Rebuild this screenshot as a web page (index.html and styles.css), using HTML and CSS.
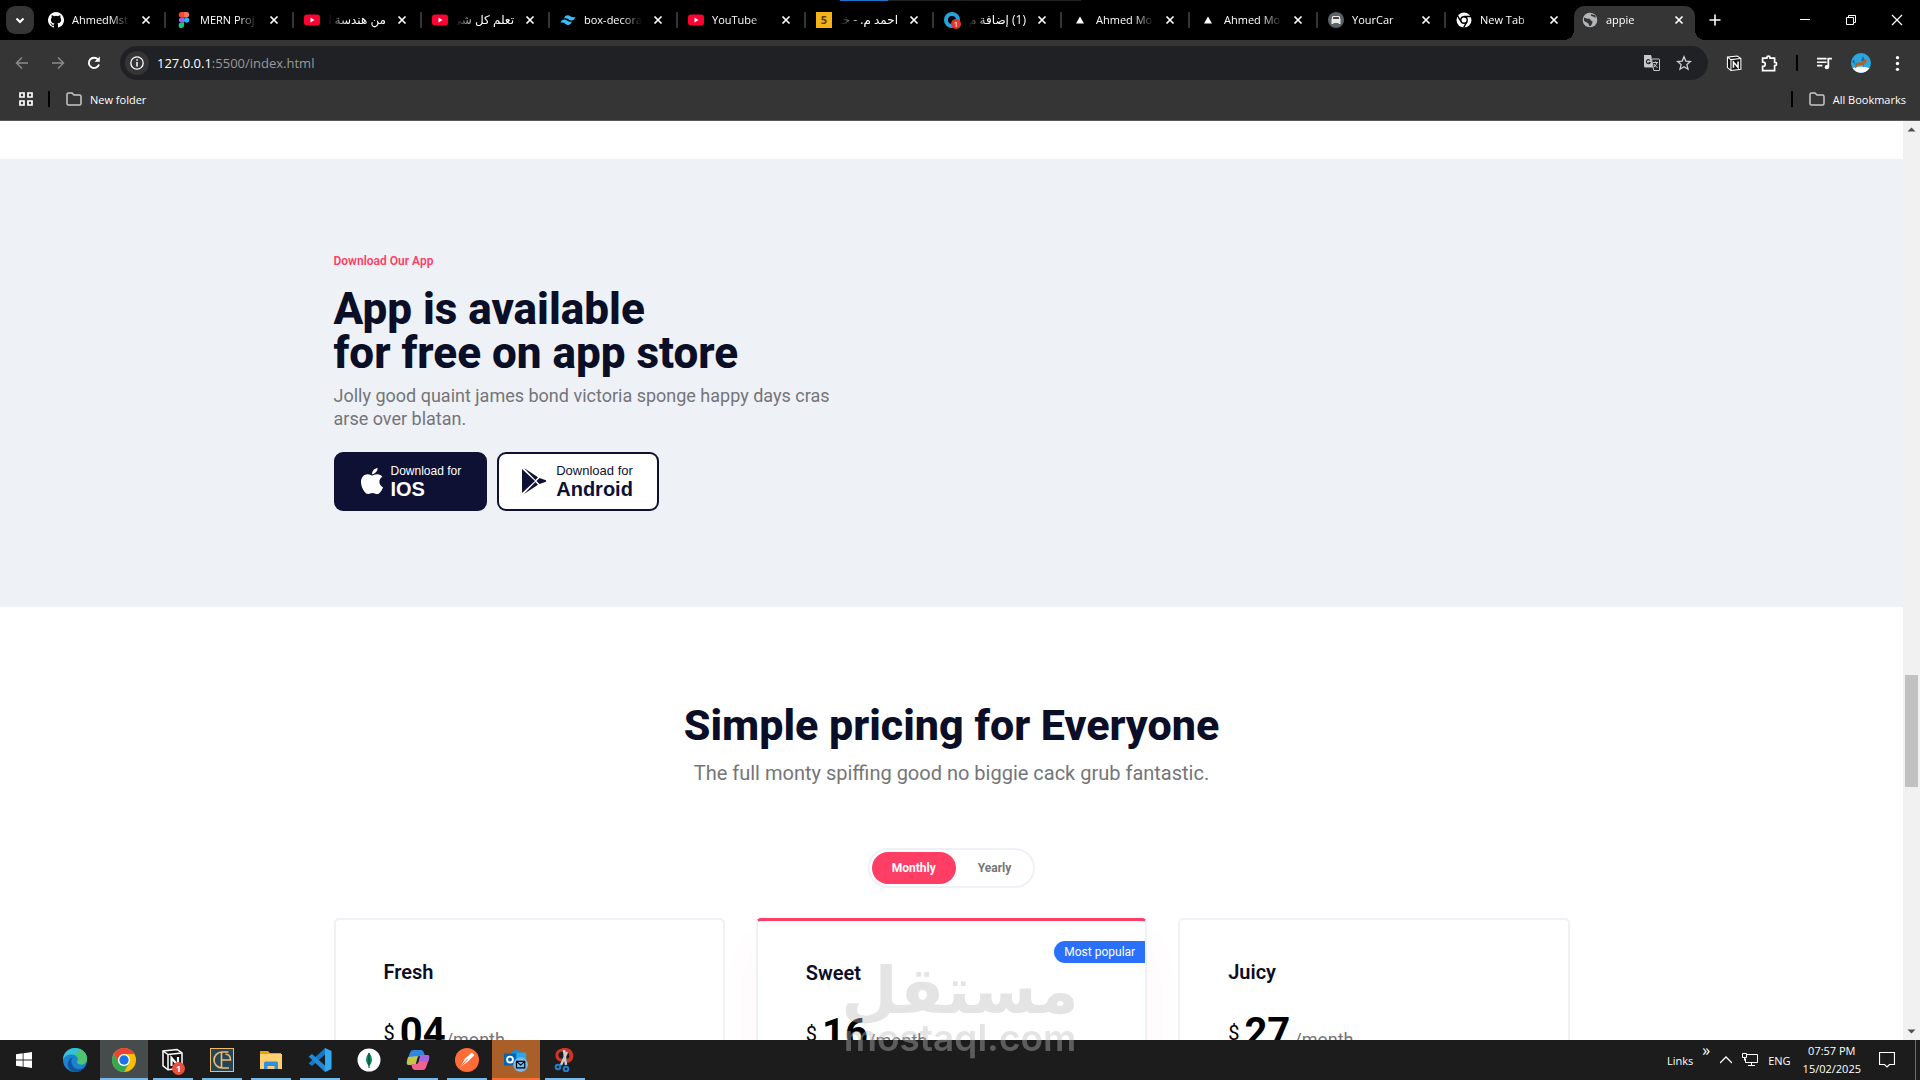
FILE: index.html
```html
<!DOCTYPE html>
<html lang="en">
<head>
  <meta charset="UTF-8">
  <title>appie</title>
  <link rel="stylesheet" href="styles.css">
</head>
<body>

  <!-- shared icons -->
  <svg class="sprite" aria-hidden="true">
    <symbol id="x" viewBox="0 0 16 16"><path d="M4.5 4.5l7 7M11.5 4.5l-7 7" stroke="currentColor" stroke-width="1.7"/></symbol>
    <symbol id="yt" viewBox="0 0 16 16"><rect y="2.5" width="16" height="11" rx="3" fill="#ff0033"/><path d="M6.5 5.6v4.8l4-2.4z" fill="#fff"/></symbol>
    <symbol id="triangle" viewBox="0 0 16 16"><path d="M8 4.500l4 7H4z" fill="#fff"/></symbol>
    <symbol id="folder" viewBox="0 0 16 14"><path d="M1 2.500q0-1.500 1.500-1.500h3.500l2 2h5.500q1.500 0 1.500 1.500v7q0 1.500-1.500 1.500h-11Q1 13 1 11.500z" fill="none" stroke="#c7c7c7" stroke-width="1.500"/></symbol>
    <symbol id="notion" viewBox="0 0 24 24"><path d="M2 3l14-1.500 5 3.500v15l-14 1.800-5-4z" fill="#111" stroke="#fff" stroke-width="1.500"/><path d="M2 3l5 3.500 14-1.500M7 6.500v15" fill="none" stroke="#fff" stroke-width="1.500"/><path d="M10.500 18V10l6.500 7.500V9" fill="none" stroke="#fff" stroke-width="2.200"/></symbol>
  </svg>

  <header class="browser">
    <div class="tab-strip">
      <button class="tab-search" aria-label="Search tabs"><svg viewBox="0 0 28 28"><path d="M10.500 12.500l3.500 3.500 3.500-3.500" fill="none" stroke="#fff" stroke-width="2"/></svg></button>

      <div class="tab">
        <svg class="fav" viewBox="0 0 16 16"><path fill="#fff" d="M8 0a8 8 0 0 0-2.530 15.590c.4.070.55-.170.55-.380v-1.490c-2.230.490-2.690-.940-2.690-.940-.360-.930-.890-1.170-.890-1.170-.730-.500.060-.490.060-.490.800.060 1.230.830 1.230.830.710 1.220 1.870.870 2.330.660.070-.520.280-.870.500-1.070-1.780-.200-3.640-.890-3.640-3.950 0-.870.310-1.590.820-2.150-.080-.200-.360-1.020.080-2.120 0 0 .670-.210 2.200.820a7.600 7.600 0 0 1 4 0c1.530-1.040 2.200-.820 2.200-.820.440 1.100.160 1.920.080 2.120.510.560.820 1.270.820 2.150 0 3.070-1.870 3.750-3.650 3.950.290.250.540.730.540 1.480v2.190c0 .210.150.460.550.380A8 8 0 0 0 8 0z"/></svg>
        <span class="tab-title">AhmedMst</span>
        <button class="tab-close" aria-label="Close tab"><svg><use href="#x"/></svg></button>
      </div>
      <div class="tab">
        <svg class="fav" viewBox="0 0 16 16"><path d="M8 0H5.500a2.700 2.700 0 0 0 0 5.400H8z" fill="#f24e1e"/><path d="M8 0h2.500a2.700 2.700 0 0 1 0 5.400H8z" fill="#ff7262"/><path d="M8 5.400H5.500a2.600 2.600 0 0 0 0 5.200H8z" fill="#a259ff"/><circle cx="10.600" cy="8" r="2.600" fill="#1abcfe"/><path d="M8 10.600H5.500A2.700 2.700 0 1 0 8 13.300z" fill="#0acf83"/></svg>
        <span class="tab-title">MERN Proj</span>
        <button class="tab-close" aria-label="Close tab"><svg><use href="#x"/></svg></button>
      </div>
      <div class="tab">
        <svg class="fav"><use href="#yt"/></svg>
        <span class="tab-title rtl" dir="rtl">من هندسة ا</span>
        <button class="tab-close" aria-label="Close tab"><svg><use href="#x"/></svg></button>
      </div>
      <div class="tab">
        <svg class="fav"><use href="#yt"/></svg>
        <span class="tab-title rtl" dir="rtl">تعلم كل شئ</span>
        <button class="tab-close" aria-label="Close tab"><svg><use href="#x"/></svg></button>
      </div>
      <div class="tab">
        <svg class="fav" viewBox="0 0 16 16"><path fill="#38bdf8" d="M4 6.500Q5 2.900 8.300 3.200c2.700.300 2.600 3 7.200 1.800Q14 9 10.800 8.500C8.500 8 7.500 5.300 4 6.500zM.5 10.900Q1.500 7.300 4.800 7.600c2.700.300 2.600 3 7.200 1.800-1.500 4-4.700 3.500-4.700 3.500C5 12.500 4 9.700.5 10.900z"/></svg>
        <span class="tab-title">box-decora</span>
        <button class="tab-close" aria-label="Close tab"><svg><use href="#x"/></svg></button>
      </div>
      <div class="tab">
        <svg class="fav"><use href="#yt"/></svg>
        <span class="tab-title">YouTube</span>
        <button class="tab-close" aria-label="Close tab"><svg><use href="#x"/></svg></button>
      </div>
      <div class="tab">
        <span class="fav five">5</span>
        <span class="tab-title rtl" dir="rtl">احمد م. - خم</span>
        <button class="tab-close" aria-label="Close tab"><svg><use href="#x"/></svg></button>
      </div>
      <div class="tab">
        <span class="fav ring"><span class="count">1</span></span>
        <span class="tab-title rtl" dir="rtl">(1) إضافة مع</span>
        <button class="tab-close" aria-label="Close tab"><svg><use href="#x"/></svg></button>
      </div>
      <div class="tab">
        <svg class="fav"><use href="#triangle"/></svg>
        <span class="tab-title">Ahmed Mo</span>
        <button class="tab-close" aria-label="Close tab"><svg><use href="#x"/></svg></button>
      </div>
      <div class="tab">
        <svg class="fav"><use href="#triangle"/></svg>
        <span class="tab-title">Ahmed Mo</span>
        <button class="tab-close" aria-label="Close tab"><svg><use href="#x"/></svg></button>
      </div>
      <div class="tab">
        <svg class="fav" viewBox="0 0 16 16"><circle cx="8" cy="8" r="8" fill="#5b6367"/><path d="M3.500 7.500l1-3.500h7l1 3.500v4.500h-2v-1h-5v1h-2z" fill="#e8e8e8"/><path d="M4.800 7l.6-2h5.200l.6 2z" fill="#444"/></svg>
        <span class="tab-title">YourCar</span>
        <button class="tab-close" aria-label="Close tab"><svg><use href="#x"/></svg></button>
      </div>
      <div class="tab last">
        <svg class="fav" viewBox="0 0 16 16"><circle cx="8" cy="8" r="7.500" fill="#fff"/><circle cx="8" cy="8" r="3.200" fill="#fff" stroke="#000" stroke-width="1.400"/><path d="M8 4.500h7M5 9.700L1.600 3.800M11 9.700l-3.400 6" stroke="#000" stroke-width="1.400"/></svg>
        <span class="tab-title">New Tab</span>
        <button class="tab-close" aria-label="Close tab"><svg><use href="#x"/></svg></button>
      </div>
      <div class="tab active">
        <svg class="fav" viewBox="0 0 16 16"><circle cx="8" cy="8" r="7.300" fill="#b4b7ba"/><path d="M2 5.500c2 .5 3 1.500 5 1.300s1 2 2.700 2.200c1.800.3.300 3-.7 4.500-.6 1-2.300.5-2.200-1 .1-1.700-3.600-2-4.800-4zM9 2c-.8 1.500.8 2.300 2 2.500s1.500 1.500 3 1l-1-2.300z" fill="#353535"/></svg>
        <span class="tab-title">appie</span>
        <button class="tab-close" aria-label="Close tab"><svg><use href="#x"/></svg></button>
      </div>
      <button class="new-tab" aria-label="New tab"><svg viewBox="0 0 16 16"><path d="M8 2.500v11M2.500 8h11" stroke="#fff" stroke-width="1.600"/></svg></button>

      <div class="window-buttons">
        <button aria-label="Minimize"><svg viewBox="0 0 12 12"><path d="M1 5.500h10" stroke="#fff"/></svg></button>
        <button aria-label="Restore"><svg viewBox="0 0 12 12"><path d="M1.500 3.500h7v7h-7zM3.500 3.500v-2h7v7h-2" fill="none" stroke="#fff"/></svg></button>
        <button aria-label="Close"><svg viewBox="0 0 12 12"><path d="M1 1l10 10M11 1L1 11" stroke="#fff" stroke-width="1.200"/></svg></button>
      </div>
      <div class="load-line"></div>
    </div>

    <div class="toolbar">
      <button class="tool dim" aria-label="Back"><svg viewBox="0 0 16 16"><path d="M14 8H3M8 2.500L2.500 8 8 13.500" fill="none" stroke="currentColor" stroke-width="1.500"/></svg></button>
      <button class="tool dim" aria-label="Forward"><svg viewBox="0 0 16 16"><path d="M2 8h11M8 2.500L13.500 8 8 13.500" fill="none" stroke="currentColor" stroke-width="1.500"/></svg></button>
      <button class="tool" aria-label="Reload"><svg viewBox="0 0 16 16"><path d="M13 9.500A5.200 5.200 0 1 1 12 4.500" fill="none" stroke="currentColor" stroke-width="1.900"/><path d="M13.800 1.500v5.300H8.500z" fill="currentColor"/></svg></button>
      <div class="address">
        <button class="site-info" aria-label="Site information"><svg viewBox="0 0 16 16"><circle cx="8" cy="8" r="6.200" fill="none" stroke="#fff" stroke-width="1.300"/><path d="M8 7v4.500M8 4.300v1.500" stroke="#fff" stroke-width="1.500"/></svg></button>
        <span class="url"><b>127.0.0.1</b>:5500/index.html</span>
        <button class="tool" aria-label="Translate"><svg viewBox="0 0 16 16"><path d="M0 0h7l1 3.500h-1l2 9H1.500Q0 12.500 0 11z" fill="#c7c7c7"/><path d="M7.500 4H15q.5 0 .5.500V15q0 .5-.5.500H9.800z" fill="none" stroke="#c7c7c7"/><path d="M6 5.500a2 2 0 1 0 .2 2H4.500" fill="none" stroke="#202124" stroke-width="1.100"/><path d="M9 7.500h5M11.500 6.500v1M13 7.500q-.5 2.500-3 4.500M10 9q1 2.500 3.500 3.500" fill="none" stroke="#c7c7c7"/></svg></button>
        <button class="tool" aria-label="Bookmark this tab"><svg viewBox="0 0 16 16"><path d="M8 1.700l1.800 4.400 4.700.4-3.600 3.100 1.100 4.600L8 11.700l-4 2.500 1.100-4.600L1.500 6.500l4.700-.4z" fill="none" stroke="#d0d0d0" stroke-width="1.300"/></svg></button>
      </div>
      <div class="extensions">
        <button class="tool" aria-label="Notion"><svg><use href="#notion"/></svg></button>
        <button class="tool" aria-label="Extensions"><svg viewBox="0 0 16 16"><path d="M1.500 3h4V2.500a1.500 1.500 0 0 1 3 0V3h4.300v4h.4a1.500 1.500 0 0 1 0 3h-.4v4.700H1.500v-4h.5a2 2 0 0 0 0-4h-.5z" fill="none" stroke="#fff" stroke-width="1.600"/></svg></button>
        <span class="divider"></span>
        <button class="tool" aria-label="Media"><svg viewBox="0 0 16 16"><path d="M1 3.500h9M1 6.800h9M1 10h5" stroke="#fff" stroke-width="1.600"/><circle cx="10.200" cy="11.500" r="2" fill="#fff"/><path d="M11.600 11.500V3.500H15" fill="none" stroke="#fff" stroke-width="1.700"/></svg></button>
        <button class="avatar" aria-label="Profile"><svg viewBox="0 0 20 20"><circle cx="10" cy="10" r="10" fill="#2aa7e0"/><path d="M1.500 15q8-3 17 0A10 10 0 0 1 1.500 15z" fill="#fff"/><path d="M1 9l2-3 1 5zM12 3l2 5h-4z" fill="#176f9e"/><path d="M3 13l2-3 6-1 3-3 2 1-1 3-2 1v3h-1v-2H7l-2 3H4l1-3z" fill="#b0602d"/></svg></button>
        <button class="tool" aria-label="Menu"><svg viewBox="0 0 16 16"><circle cx="8" cy="2.500" r="1.600" fill="#fff"/><circle cx="8" cy="8" r="1.600" fill="#fff"/><circle cx="8" cy="13.500" r="1.600" fill="#fff"/></svg></button>
      </div>
    </div>

    <div class="bookmarks">
      <button class="tool" aria-label="Apps"><svg viewBox="0 0 16 16"><path d="M2 2h4v4H2zM10 2h4v4h-4zM2 10h4v4H2zM10 10h4v4h-4z" fill="none" stroke="#fff" stroke-width="1.700"/></svg></button>
      <span class="divider"></span>
      <a class="bookmark" href="#"><svg><use href="#folder"/></svg>New folder</a>
      <span class="divider push"></span>
      <a class="bookmark" href="#"><svg><use href="#folder"/></svg>All Bookmarks</a>
    </div>
  </header>

  <div class="viewport">
    <main class="page">
      <section class="download">
        <div class="content">
          <span class="eyebrow">Download Our App</span>
          <h2>App is available<br>for free on app store</h2>
          <p>Jolly good quaint james bond victoria sponge happy days cras arse over blatan.</p>
          <div class="stores">
            <button class="store ios">
              <svg viewBox="0 0 384 512"><path fill="currentColor" d="M318.700 268.700c-.2-36.700 16.400-64.400 50-84.800-18.800-26.900-47.200-41.700-84.700-44.600-35.500-2.800-74.300 20.700-88.500 20.700-15 0-49.400-19.700-76.400-19.700C63.300 141.200 4 184.800 4 273.500q0 39.300 14.400 81.200c12.800 36.700 59 126.700 107.200 125.200 25.200-.6 43-17.900 75.800-17.900 31.800 0 48.300 17.900 76.400 17.900 48.600-.7 90.400-82.500 102.600-119.300-65.200-30.700-61.700-90-61.700-91.900zm-56.600-164.200c27.300-32.400 24.800-61.900 24-72.500-24.100 1.400-52 16.400-67.900 34.900-17.500 19.800-27.800 44.300-25.600 71.900 26.100 2 49.900-11.400 69.500-34.300z"/></svg>
              <span class="label"><small>Download for</small><strong>IOS</strong></span>
            </button>
            <button class="store android">
              <svg viewBox="0 0 26 28"><path d="M1 2l13 12L1 26z" fill="#0e1133"/><path d="M3 1l14 9.300-2.600 2.600zM3 27l14-9.300-2.600-2.600z" fill="#0e1133"/><path d="M18.500 11L25 13.200v1.600L18.500 17l-3-3z" fill="#0e1133"/></svg>
              <span class="label"><small>Download for</small><strong>Android</strong></span>
            </button>
          </div>
        </div>
      </section>

      <section class="pricing">
        <div class="content">
          <h2>Simple pricing for Everyone</h2>
          <p>The full monty spiffing good no biggie cack grub fantastic.</p>
          <div class="toggle">
            <button class="on">Monthly</button>
            <button>Yearly</button>
          </div>
          <div class="cards">
            <article class="card">
              <h3>Fresh</h3>
              <div class="price"><sup>$</sup><b>04</b><span>/month</span></div>
            </article>
            <article class="card popular">
              <span class="badge">Most popular</span>
              <h3>Sweet</h3>
              <div class="price"><sup>$</sup><b>16</b><span>/month</span></div>
            </article>
            <article class="card">
              <h3>Juicy</h3>
              <div class="price"><sup>$</sup><b>27</b><span class="spaced">/month</span></div>
            </article>
          </div>
        </div>
      </section>
    </main>
    <div class="scrollbar">
      <svg viewBox="0 0 17 17"><path d="M8.500 6.500l4 4h-8z" fill="#505050"/></svg>
      <div class="track"><div class="thumb"></div></div>
      <svg viewBox="0 0 17 17"><path d="M8.500 10.500l-4-4h8z" fill="#505050"/></svg>
    </div>
  </div>

  <footer class="taskbar">
    <button class="task start" aria-label="Start"><svg viewBox="0 0 16 16"><path d="M0 2.300l6.700-1v6.300H0zM7.500 1.200L16 0v7.600H7.500zM0 8.400h6.700v6.300L0 13.700zM7.500 8.400H16V16l-8.500-1.200z" fill="#fff"/></svg></button>
    <button class="task" aria-label="Edge"><svg viewBox="0 0 24 24"><circle cx="12" cy="12" r="12" fill="#1a82d0"/><path d="M0 12C0 5 5 0 12 0s12 5 12 10.500c0 4-3 6-6 6-2.500 0-4-1-4-2.200 0-.8 1-1.300 1-3C15 8.500 11.500 6.500 8 6.500c-4 0-7 2.500-8 5.500z" fill="#35c1d6"/><path d="M17 1.200C21.500 3.200 24 6.800 24 10.500c0 4-3 6-6 6-2.500 0-4-1-4-2.200 0-.8 1-1.300 1-3 0-2-1.500-3.400-3-4.300z" fill="#4fc46a"/><path d="M10 9c-3 3-2 10 4 12 3 1 6-.5 8-3-2 4-6 6-10 6-5-1-8-5-7-9 .5-3 2-5 5-6z" fill="#12559f"/></svg></button>
    <button class="task open current" aria-label="Chrome"><svg viewBox="0 0 24 24"><circle cx="12" cy="12" r="12" fill="#fbbc04"/><path d="M1.600 6A12 12 0 0 1 22.400 6H12a6 6 0 0 0-5.200 9z" fill="#ea4335"/><path d="M1.600 6A12 12 0 0 0 12 24l5.200-9A6 6 0 0 1 6.800 15z" fill="#34a853"/><circle cx="12" cy="12" r="6" fill="#fff"/><circle cx="12" cy="12" r="4.700" fill="#1a73e8"/></svg></button>
    <button class="task open" aria-label="Notion"><svg><use href="#notion"/></svg><span class="alert">1</span></button>
    <button class="task open" aria-label="Editor"><svg viewBox="0 0 24 24"><rect x=".5" y=".5" width="23" height="23" fill="#264653" stroke="#f0bb74"/><path d="M18.500 4H12a8 8 0 0 0 0 16h7M11.500 4v16M11.500 12h9q0-5.500-5-6" fill="none" stroke="#f0bb74" stroke-width="1.600"/></svg></button>
    <button class="task open" aria-label="File Explorer"><svg viewBox="0 0 24 24"><path d="M1 3h8l2 2h11v5H1z" fill="#e5a50a"/><path d="M1 6h22v15H1z" fill="#ffcf70"/><path d="M5 21v-6q0-1.500 1.500-1.500h11Q19 13.500 19 15v6h-3.500v-3h-7v3z" fill="#2f8fe0"/></svg></button>
    <button class="task open" aria-label="VS Code"><svg viewBox="0 0 24 24"><path d="M17 0l6.500 3v18L17 24z" fill="#2faaf2"/><path d="M17 0v6.500L4 18 .5 15.500z" fill="#1478c4"/><path d="M17 24v-6.500L4 6 .5 8.500z" fill="#1f8ad6"/></svg></button>
    <button class="task" aria-label="MongoDB Compass"><svg viewBox="0 0 24 24"><circle cx="12" cy="12" r="11.500" fill="#fff"/><path d="M12 4.500q6 7 0 14-6-7 0-14z" fill="#0b8a5c"/><path d="M12 5v15" stroke="#123b33"/></svg></button>
    <button class="task open" aria-label="Copilot"><svg viewBox="0 0 24 24"><path d="M7 2h8q2 0 2.700 2L19 8h-5q-2 0-2.600 2L9.500 17H3Q0 17 1 13L4 4.500Q5 2 7 2z" fill="#2f86df"/><path d="M2 9l9.800-1-2.300 9H3Q0 17 1 13z" fill="#c4c646"/><path d="M17 22H9q-2 0-2.700-2L5 16h5q2 0 2.600-2l1.900-7H21q3 0 2 4l-3 8.500q-1 2.500-3 2.500z" fill="#f0628f"/><path d="M14.500 7H21q3 0 2 4l-1 3-9-1z" fill="#a666e0"/></svg></button>
    <button class="task open" aria-label="Postman"><svg viewBox="0 0 24 24"><circle cx="12" cy="12" r="12" fill="#ff6c37"/><path d="M5 19.500l5-9 7-6 2.500 2.500-6.500 6.500z" fill="#fff"/><path d="M5 19.500l7.500-8.500" stroke="#ff6c37"/></svg></button>
    <button class="task open urgent" aria-label="Outlook"><svg viewBox="0 0 26 26"><path d="M4 8l9-7 10 7v11H4z" fill="#1490df"/><path d="M14 5h10v9H14z" fill="#28a8ea"/><rect y="6" width="13" height="13" rx="1" fill="#0a64ad"/><circle cx="6.500" cy="12.500" r="3.200" fill="none" stroke="#fff" stroke-width="2"/><circle cx="18" cy="18" r="8" fill="#76b9ed"/><path d="M13.500 14.500h9v7h-9zl4.500 4 4.500-4" fill="none" stroke="#000" stroke-width="1.200"/></svg></button>
    <button class="task open" aria-label="Snipping Tool"><svg viewBox="0 0 24 24"><path d="M9 2h4c6 0 8 10 1 11" fill="none" stroke="#cf3527" stroke-width="4"/><path d="M10 2C1 2 3 13 9 12" fill="none" stroke="#cf3527" stroke-width="3"/><path d="M11 2l2 15M14 4L8 17" stroke="#ccc" stroke-width="2.500"/><circle cx="5" cy="19" r="2.300" fill="none" stroke="#2180d4" stroke-width="2"/><circle cx="13" cy="21" r="2.300" fill="none" stroke="#2180d4" stroke-width="2"/></svg></button>

    <div class="tray">
      <span class="links">Links</span>
      <span class="more">»</span>
      <svg class="chevron" viewBox="0 0 12 12"><path d="M0 9l6-6 6 6" fill="none" stroke="#fff" stroke-width="1.300"/></svg>
      <svg class="network" viewBox="0 0 16 14"><path d="M5 1.500h10.500v8H3.500v-4M9.500 9.500v3M6 12.500h7M.5.500h4v4h-4zM2.500 4.500v3" fill="none" stroke="#fff"/></svg>
      <span class="lang">ENG</span>
      <span class="clock">07:57 PM<br>15/02/2025</span>
      <svg class="notes" viewBox="0 0 16 16"><path d="M.5.500h15v12h-5L8 15l-2.500-2.500h-5z" fill="none" stroke="#fff" stroke-width="1.200"/></svg>
      <span class="peek"></span>
    </div>
  </footer>

  <div class="watermark">
    <span class="mark-ar" lang="ar" dir="rtl">مستقل</span>
    <span class="mark-en">mostaql.com</span>
  </div>

</body>
</html>
```
FILE: styles.css
```css
* {
  box-sizing: border-box;
}

body {
  margin: 0;
  height: 100vh;
  display: flex;
  flex-direction: column;
  overflow: hidden;
  font-family: Roboto, sans-serif;
  background: #fff;
}

h2, h3, p {
  margin: 0;
}

button {
  padding: 0;
  border: none;
  background: none;
  color: inherit;
  cursor: pointer;
}

svg {
  display: block;
}

.sprite {
  position: absolute;
  width: 0;
  height: 0;
}

/* browser frame */
.browser {
  flex: none;
  background: #353535;
  color: #fff;
  font-family: "Open Sans", "DejaVu Sans", sans-serif;
  font-size: 11px;
  border-bottom: 1px solid #5a5a5a;
}

.tab-strip {
  position: relative;
  display: flex;
  align-items: flex-end;
  height: 40px;
  padding-left: 6px;
  background: #000;
}

.tab-search {
  width: 28px;
  height: 28px;
  margin: 0 4px 6px 0;
  border-radius: 9px;
  background: #353535;
}

.tab {
  position: relative;
  flex: 0 1 128px;
  min-width: 0;
  display: flex;
  align-items: center;
  height: 34px;
  padding: 0 12px 6px 10px;
}

.tab::after {
  content: "";
  position: absolute;
  right: 0;
  top: 6px;
  width: 2px;
  height: 16px;
  background: #353535;
}

.tab.last::after,
.tab.active::after {
  display: none;
}

.tab.active {
  flex-basis: 121px;
  padding: 0 8px 6px;
  border-radius: 10px 10px 0 0;
  background: #353535;
}

/* flared foot of the active tab */
.tab.active::before {
  content: "";
  position: absolute;
  left: -10px;
  right: -10px;
  bottom: 0;
  height: 10px;
  background:
    radial-gradient(circle at 0 0, #000 10px, #353535 10px) left / 10px 10px no-repeat,
    radial-gradient(circle at 100% 0, #000 10px, #353535 10px) right / 10px 10px no-repeat;
}

.fav {
  flex: none;
  width: 16px;
  height: 16px;
  margin-right: 8px;
}

.five {
  background: #f5b31b;
  color: #5a3d10;
  font-weight: 700;
  line-height: 16px;
  text-align: center;
}

.ring {
  position: relative;
  border: 4px solid #26a5dc;
  border-radius: 50%;
}

.count {
  position: absolute;
  right: -5px;
  bottom: -5px;
  width: 10px;
  height: 10px;
  border-radius: 50%;
  background: #e03535;
  font-size: 8px;
  line-height: 10px;
  text-align: center;
}

.tab-title {
  flex: 1;
  min-width: 0;
  overflow: hidden;
  white-space: nowrap;
  line-height: 16px;
  mask-image: linear-gradient(to left, transparent, #000 20px);
}

.tab-title.rtl {
  font-size: 12px;
  mask-image: linear-gradient(to right, transparent, #000 20px);
}

.tab-close {
  flex: none;
  margin-left: 8px;
}

.tab-close svg {
  width: 16px;
  height: 16px;
}

.new-tab {
  width: 16px;
  height: 16px;
  margin: 0 0 12px 12px;
}

.window-buttons {
  display: flex;
  margin-left: auto;
}

.window-buttons button {
  display: flex;
  align-items: center;
  justify-content: center;
  width: 46px;
  height: 40px;
}

.window-buttons svg {
  width: 12px;
  height: 12px;
}

.load-line {
  position: absolute;
  top: 0;
  left: 840px;
  width: 241px;
  height: 1px;
  background: linear-gradient(to right, #1a74c8 48px, #222 48px);
}

.toolbar {
  display: flex;
  align-items: center;
  height: 46px;
  padding: 0 14px;
  background: #353535;
}

.tool {
  flex: none;
}

.tool svg {
  width: 16px;
  height: 16px;
}

.toolbar > .tool {
  margin-right: 20px;
}

.dim {
  color: #8a8a8a;
}

.address {
  flex: 1;
  display: flex;
  align-items: center;
  gap: 16px;
  height: 34px;
  padding: 0 16px 0 5px;
  margin-right: 18px;
  margin-left: -2px;
  border-radius: 17px;
  background: #202124;
}

.site-info {
  display: flex;
  align-items: center;
  justify-content: center;
  width: 24px;
  height: 24px;
  margin-right: -8px;
  border-radius: 50%;
  background: #353535;
}

.site-info svg {
  width: 16px;
  height: 16px;
}

.url {
  flex: 1;
  font-size: 13px;
  color: #9a9a9a;
}

.url b {
  font-weight: 400;
  color: #fff;
}

.extensions {
  display: flex;
  align-items: center;
  gap: 18px;
}

.extensions .tool svg {
  width: 17px;
  height: 17px;
}

.divider {
  width: 2px;
  height: 16px;
  background: #000;
}

.avatar svg {
  width: 20px;
  height: 20px;
}

.bookmarks {
  display: flex;
  align-items: center;
  height: 34px;
  padding: 0 14px 8px 18px;
}

.bookmarks .divider {
  margin: 0 16px 0 14px;
}

.bookmarks .push {
  margin-left: auto;
}

.bookmark {
  display: flex;
  align-items: center;
  gap: 8px;
  color: #fff;
  text-decoration: none;
}

.bookmark svg {
  width: 16px;
  height: 14px;
}

/* page area */
.viewport {
  flex: 1;
  min-height: 0;
  display: flex;
}

.page {
  flex: 1;
  overflow: hidden;
  padding-top: 38px;
}

.content {
  width: 65%;
  max-width: 1236px;
  margin: 0 auto;
}

h2 {
  font-size: 44px;
  line-height: 44px;
  font-weight: 800;
  color: #0a0e27;
}

.download {
  padding: 95px 0 96px;
  background: #eef1f6;
}

.eyebrow {
  display: block;
  margin-bottom: 19px;
  font-size: 12px;
  line-height: 14px;
  font-weight: 600;
  color: #ff3e66;
}

.download p {
  max-width: 520px;
  margin: 9px 0 22px;
  font-size: 18px;
  line-height: 23px;
  color: #747579;
}

.stores {
  display: flex;
  gap: 10px;
}

.store {
  display: flex;
  align-items: center;
  gap: 7px;
  height: 59px;
  padding: 0 24px 2px;
  border: 2px solid #0e1133;
  border-radius: 9px;
  font-family: "Liberation Sans", Arial, sans-serif;
}

.store svg {
  width: 24px;
  height: 30px;
}

.ios {
  background: #0e1133;
  color: #fff;
}

.android {
  gap: 9px;
  padding: 0 24px 2px 22px;
  background: #fff;
  color: #0e1133;
}

.android svg {
  width: 26px;
}

.label {
  display: flex;
  flex-direction: column;
  text-align: left;
}

.label small {
  font-size: 12px;
  line-height: 16px;
}

.android small {
  font-size: 13px;
}

.label strong {
  font-size: 20px;
  line-height: 20px;
}

.pricing {
  padding-top: 96px;
}

.pricing h2,
.pricing p {
  text-align: center;
}

.pricing h2 {
  font-size: 43px;
}

.pricing p {
  margin: 14px 0 63px;
  font-size: 20px;
  line-height: 24px;
  color: #747579;
}

.toggle {
  display: flex;
  gap: 2px;
  width: max-content;
  margin: 0 auto 30px;
  padding: 2px;
  border: 2px solid #eef1f6;
  border-radius: 20px;
}

.toggle button {
  height: 32px;
  padding: 0 20px;
  border-radius: 16px;
  font: 700 12px Roboto, sans-serif;
  color: #747579;
}

.toggle .on {
  background: #ff3e66;
  color: #fff;
}

.cards {
  display: grid;
  grid-template-columns: repeat(3, 1fr);
  gap: 31px;
}

.card {
  position: relative;
  height: 480px;
  padding: 40px 48px;
  border: 2px solid #eef1f6;
  border-radius: 5px;
  background: #fff;
}

.popular {
  border-top: 3px solid #ff3e66;
  box-shadow: 0 30px 40px rgba(255, 62, 102, 0.05);
}

.card h3 {
  font-size: 20px;
  line-height: 24px;
  font-weight: 600;
  color: #0a0e27;
}

.badge {
  position: absolute;
  top: 20px;
  right: 0;
  padding: 0 10px;
  border-radius: 11px 0 0 11px;
  background: #2b70fa;
  color: #fff;
  font-size: 12px;
  line-height: 22px;
}

.price {
  display: flex;
  align-items: baseline;
  margin-top: 25px;
  line-height: 48px;
  color: #000;
}

.price sup {
  align-self: flex-start;
  margin-right: 5px;
  font-size: 20px;
}

.price b {
  font-size: 40px;
}

.price span {
  font-size: 18px;
  color: #747579;
}

.price .spaced {
  margin-left: 4px;
}

.scrollbar {
  display: flex;
  flex-direction: column;
  width: 17px;
  background: #f1f1f1;
}

.scrollbar svg {
  width: 17px;
  height: 17px;
}

.track {
  flex: 1;
  padding: 0 2px;
}

.thumb {
  height: 112px;
  margin-top: 537px;
  background: #c1c1c1;
}

/* windows taskbar */
.taskbar {
  flex: none;
  display: flex;
  gap: 1px;
  height: 40px;
  background: #1c1c1c;
  color: #fff;
  font-family: "Open Sans", sans-serif;
  font-size: 11px;
}

.task {
  position: relative;
  display: flex;
  align-items: center;
  justify-content: center;
  width: 48px;
  height: 40px;
}

.task svg {
  width: 24px;
  height: 24px;
}

.start {
  margin-right: 2px;
}

.start svg {
  width: 16px;
  height: 16px;
}

.open::after {
  content: "";
  position: absolute;
  left: 4px;
  right: 4px;
  bottom: 0;
  height: 2px;
  background: #76b9ed;
}

.current {
  background: #464b4b;
}

.current::after,
.urgent::after {
  left: 0;
  right: 0;
}

.urgent {
  background: #a95f27;
}

.urgent::after {
  background: #ff6c37;
}

.alert {
  position: absolute;
  right: 12px;
  bottom: 5px;
  width: 13px;
  height: 13px;
  border-radius: 50%;
  background: #e8503c;
  color: #fff;
  font: 700 9px/13px "Open Sans", sans-serif;
}

.tray {
  display: flex;
  align-items: center;
  margin-left: auto;
}

.links {
  margin-right: 9px;
}

.more {
  margin: 0 10px 20px 0;
  font-size: 16px;
}

.chevron {
  width: 12px;
  height: 12px;
}

.network {
  width: 16px;
  height: 14px;
  margin: 0 10px;
}

.clock {
  margin: 0 18px 0 12px;
  line-height: 18px;
  text-align: center;
}

.notes {
  width: 16px;
  height: 16px;
  margin-right: 20px;
}

.peek {
  width: 5px;
  height: 40px;
  border-left: 1px solid #6a6a6a;
}

/* watermark over everything */
.watermark {
  position: absolute;
  left: 0;
  right: 0;
  bottom: 22px;
  display: flex;
  flex-direction: column;
  align-items: center;
  color: rgb(190, 190, 190);
  opacity: 0.4;
  pointer-events: none;
}

.mark-ar {
  font: 700 65px/55px "DejaVu Sans", sans-serif;
}

.mark-en {
  font: 600 37px/40px Inter, sans-serif;
}
```
